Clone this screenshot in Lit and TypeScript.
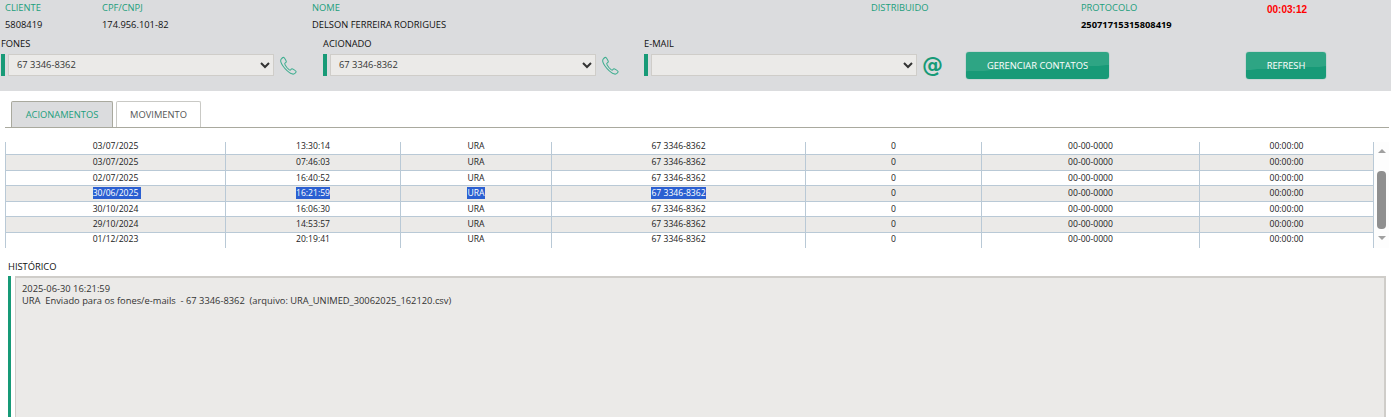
import { LitElement, html, css, svg } from "lit";
import { customElement } from "lit/decorators.js";

const ROWS = [
  ["03/07/2025", "13:30:14"],
  ["03/07/2025", "07:46:03"],
  ["02/07/2025", "16:40:52"],
  ["30/06/2025", "16:21:59"],
  ["30/10/2024", "16:06:30"],
  ["29/10/2024", "14:53:57"],
  ["01/12/2023", "20:19:41"],
];
const PHONE = "67 3346-8362";

const phoneIcon = svg`<svg class="ico" viewBox="0 0 20 20" width="19" height="19" fill="none" stroke="#3fae90" stroke-width="1.1" stroke-linejoin="round"><path d="M2.200 3.400C3 2.200 4.400 1.300 5.200 1.500c.6.2 2.600 4 2.500 4.600-.1.5-1.600 1.200-1.700 1.800-.1.8 1 2.600 2.300 4.200 1.300 1.500 2.700 2.900 3.400 2.800.6 0 1.300-1.500 1.900-1.500.7 0 4.300 2.300 4.400 3 .1.7-1 1.900-2 2.400-1.600.8-4.200-.3-7.500-3.300C5.300 12.300 2.800 8.800 2 6.400c-.3-1.100-.3-2.200.2-3z"/></svg>`;

@customElement("app-root")
export class AppRoot extends LitElement {
  static styles = css`
    :host {
      display: block;
      width: 1391px;
      height: 417px;
      overflow: hidden;
      background: #fff;
      font-family: "Open Sans", sans-serif;
      font-size: 9.33px;
      color: #222;
    }
    .head {
      height: 91px;
      box-sizing: border-box;
      background: #dbdcde;
      padding-top: 2px;
    }
    .info {
      display: grid;
      grid-template-columns: 97px 210px 559px 210px 186px 100px;
      margin-left: 5px;
      height: 31px;
    }
    .info div { display: flex; flex-direction: column; }
    .lab { color: #1c9e7c; line-height: 12px; height: 17px; }
    .val { color: #111; line-height: 12px; }
    .val.b { font-weight: 700; color: #000; }
    .timer {
      font-family: "Liberation Sans", sans-serif;
      font-size: 10px;
      font-weight: 700;
      color: #f00;
      line-height: 14px;
      padding-top: 1px;
    }
    .forms { display: flex; margin-top: 4px; height: 46px; }
    .group { width: 322px; flex: none; padding-left: 1px; box-sizing: border-box; }
    .group.mid { width: 321px; }
    .group.mail { width: 323px; }
    .glabel { color: #111; line-height: 12px; height: 16px; margin-top: 1px; }
    .control { display: flex; align-items: center; height: 22px; }
    .bar { width: 4px; height: 22px; background: #179a77; flex: none; }
    select {
      margin: 0 0 0 3px;
      width: 266px;
      height: 22px;
      box-sizing: border-box;
      border: 1px solid #cfcdc9;
      border-radius: 0;
      background-color: #ebeae8;
      font: inherit;
      color: #333;
      padding: 0 0 1px 4px;
      outline: none;
    }
    .ico { margin-left: 5px; flex: none; }
    .at {
      margin-left: 5px;
      font-family: "DejaVu Sans", sans-serif;
      font-size: 21px;
      font-weight: 700;
      color: #179a77;
      line-height: 22px;
    }
    .btn {
      height: 27px;
      margin-top: 15px;
      border: none;
      border-radius: 3px;
      color: #fff;
      font: inherit;
      padding: 0;
      background: linear-gradient(177.5deg, #2ea584 0 58%, #179a77 59% 100%);
      box-shadow: 0 0 1px #179a77;
    }
    .btn.manage { width: 143px; }
    .btn.refresh { width: 80px; margin-left: 137px; }
    .tabs {
      display: flex;
      gap: 3px;
      margin: 10px 2px 0 5px;
      padding-left: 6px;
      height: 26px;
      border-bottom: 1px solid #a9a99e;
    }
    .tab {
      height: 26px;
      box-sizing: border-box;
      border: 1px solid #c9c9c5;
      border-bottom: none;
      border-radius: 2px 2px 0 0;
      display: flex;
      align-items: center;
      justify-content: center;
      background: #fff;
      color: #555;
    }
    .tab.on {
      width: 102px;
      background: #dbdcde;
      color: #1c9e7c;
      border-color: #a9a99e;
    }
    .tab.off { width: 85px; }
    .grid {
      display: flex;
      margin: 11px 0 0 5px;
      height: 109px;
      overflow: hidden;
    }
    .scroller {
      position: relative;
      width: 1369px;
      height: 109px;
      overflow: hidden;
    }
    .fade {
      position: absolute;
      left: 0;
      top: 0;
      width: 100%;
      height: 3px;
      background: #fff;
    }
    table {
      border-collapse: collapse;
      table-layout: fixed;
      width: 1369px;
      color: #222;
      font-size: 8.6px;
    }
    td {
      padding: 0 0 1px;
      text-align: center;
      border-right: 1px solid #b9c9d6;
      border-bottom: 1px solid #b9c9d6;
      line-height: 12px;
    }
    td:first-child { border-left: 1px solid #b9c9d6; }
    tr:nth-child(even) td { background: #ebeae8; height: 14px; }
    tr:nth-child(odd) td { height: 13px; }
    tr:first-child td { height: 13px; padding-bottom: 2px; }
    tr:last-child td { height: 16px; vertical-align: top; }
    tr.sel span { background: #2a5fd1; color: #fff; }
    tr.sel td:first-child span { box-shadow: 3px 0 0 #2a5fd1; }
    .sb {
      width: 15px;
      height: 106px;
      margin-top: 3px;
      display: flex;
      flex-direction: column;
      align-items: center;
      background: #fdfdfd;
    }
    .arrow { width: 0; height: 0; border-left: 4.500px solid transparent; border-right: 4.500px solid transparent; }
    .arrow.up { border-bottom: 4px solid #a0a0a0; margin-top: 7px; }
    .arrow.down { border-top: 4px solid #a0a0a0; margin-top: 7px; }
    .thumb { width: 9px; height: 58px; flex: none; border-radius: 4px; background: #8f8f8f; margin-top: 18px; }
    .hist-label { color: #111; margin: 13px 0 0 8px; line-height: 12px; height: 15px; }
    .hist { display: flex; margin-left: 8px; height: 141px; }
    .hist .bar { width: 3px; height: auto; }
    .box {
      width: 1371px;
      box-sizing: border-box;
      margin-left: 4px;
      border: 1px solid #cfcdc9;
      border-width: 2px 2px 0 1px;
      background: #ebeae8;
      padding: 5px 0 0 6px;
      color: #333;
      line-height: 12px;
      white-space: pre;
    }
  `;

  private select(value: string) {
    return html`<select>${value ? html`<option>${value}</option>` : html`<option></option>`}</select>`;
  }

  render() {
    return html`
      <div class="head">
        <div class="info">
          <div><span class="lab">CLIENTE</span><span class="val">5808419</span></div>
          <div><span class="lab">CPF/CNPJ</span><span class="val">174.956.101-82</span></div>
          <div><span class="lab">NOME</span><span class="val">DELSON FERREIRA RODRIGUES</span></div>
          <div><span class="lab">DISTRIBUIDO</span></div>
          <div><span class="lab">PROTOCOLO</span><span class="val b">25071715315808419</span></div>
          <div><span class="timer">00:03:12</span></div>
        </div>
        <div class="forms">
          <div class="group">
            <div class="glabel">FONES</div>
            <div class="control"><span class="bar"></span>${this.select(PHONE)}${phoneIcon}</div>
          </div>
          <div class="group mid">
            <div class="glabel">ACIONADO</div>
            <div class="control"><span class="bar"></span>${this.select(PHONE)}${phoneIcon}</div>
          </div>
          <div class="group mail">
            <div class="glabel">E-MAIL</div>
            <div class="control"><span class="bar"></span>${this.select("")}<span class="at">@</span></div>
          </div>
          <button class="btn manage">GERENCIAR CONTATOS</button>
          <button class="btn refresh">REFRESH</button>
        </div>
      </div>
      <div class="tabs">
        <div class="tab on">ACIONAMENTOS</div>
        <div class="tab off">MOVIMENTO</div>
      </div>
      <div class="grid">
        <div class="scroller">
          <table>
            <colgroup>
              <col style="width:220px" /><col style="width:175px" /><col style="width:151px" />
              <col style="width:254px" /><col style="width:176px" /><col style="width:218px" /><col style="width:174px" />
            </colgroup>
            <tbody>
              ${ROWS.map(
                (r, i) => html`<tr class=${i === 3 ? "sel" : ""}>
                  <td><span>${r[0]}</span></td>
                  <td><span>${r[1]}</span></td>
                  <td><span>URA</span></td>
                  <td><span>${PHONE}</span></td>
                  <td>0</td>
                  <td>00-00-0000</td>
                  <td>00:00:00</td>
                </tr>`
              )}
            </tbody>
          </table>
          <div class="fade"></div>
        </div>
        <div class="sb">
          <span class="arrow up"></span>
          <span class="thumb"></span>
          <span class="arrow down"></span>
        </div>
      </div>
      <div class="hist-label">HISTÓRICO</div>
      <div class="hist">
        <span class="bar"></span>
        <div class="box">2025-06-30 16:21:59
URA  Enviado para os fones/e-mails  - 67 3346-8362  (arquivo: URA_UNIMED_30062025_162120.csv)</div>
      </div>
    `;
  }
}
